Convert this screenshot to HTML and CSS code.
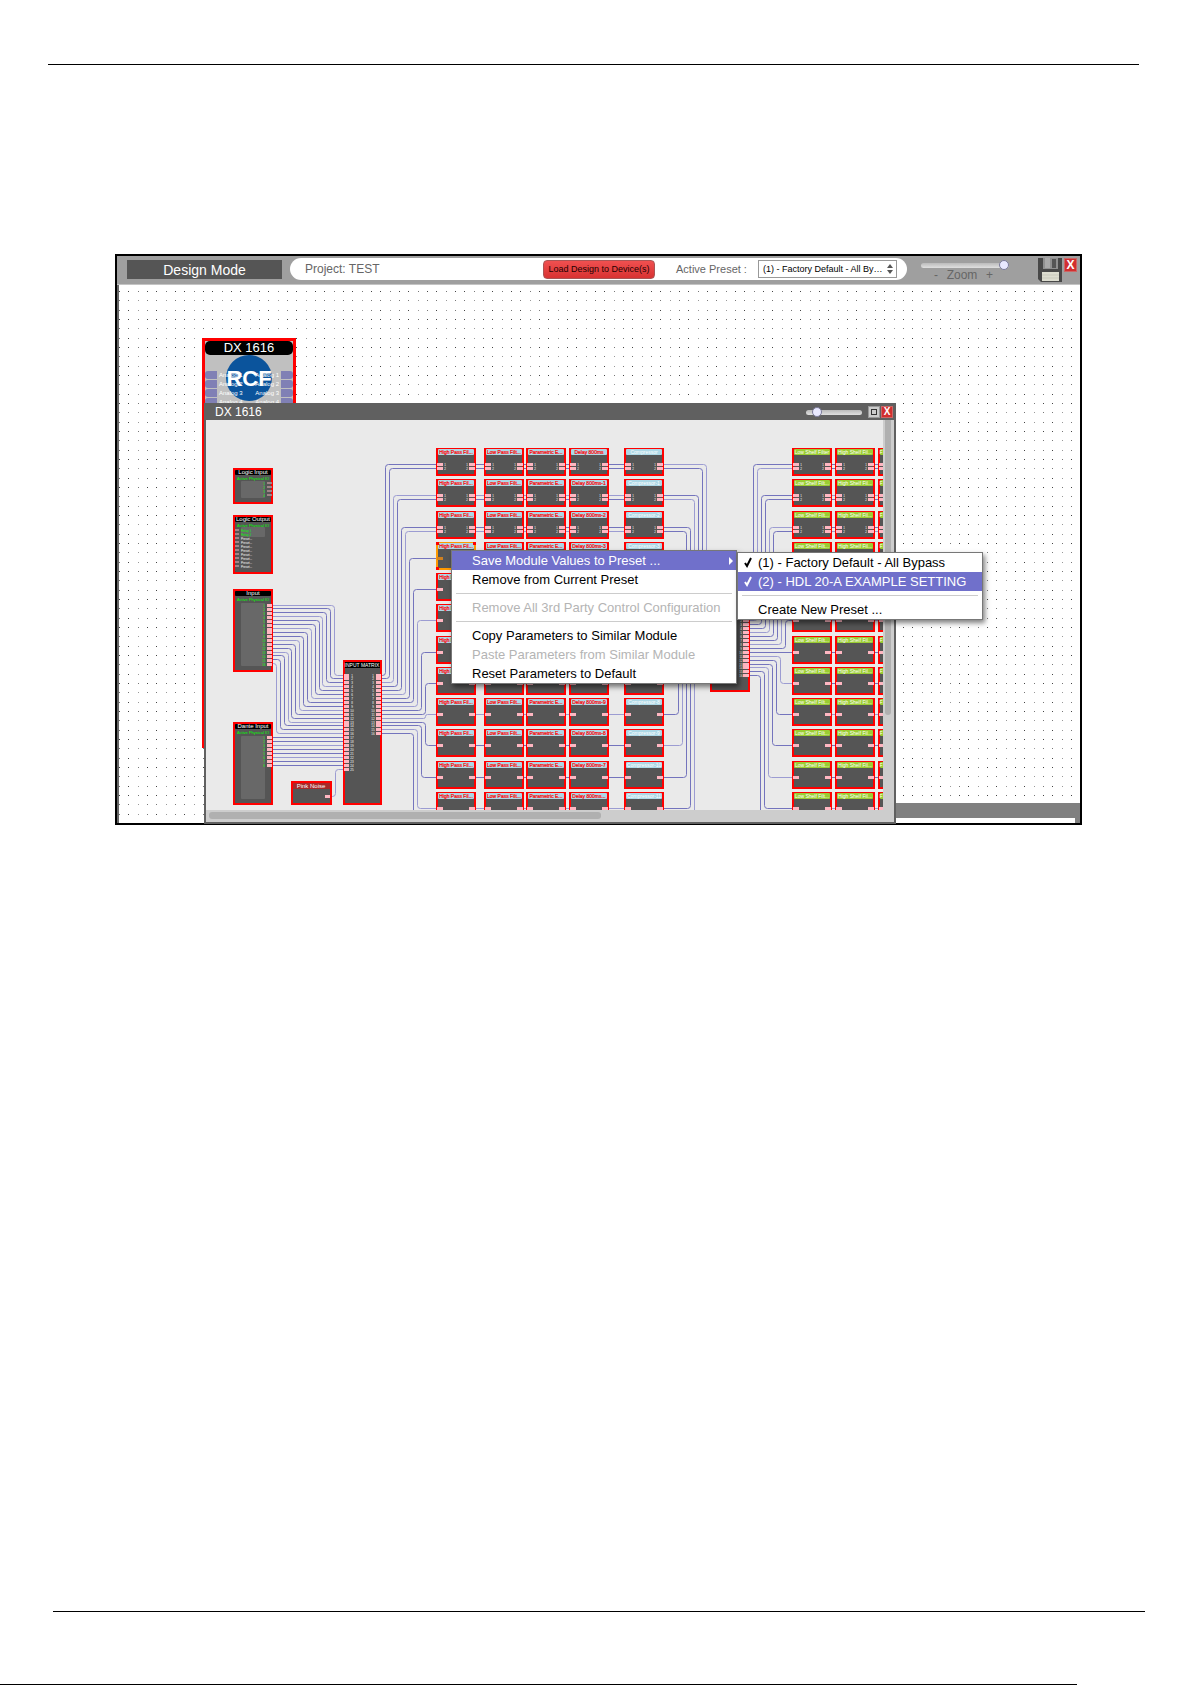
FILE: index.html
```html
<!DOCTYPE html>
<html lang="en">
<head>
<meta charset="utf-8">
<meta name="viewport" content="width=device-width, initial-scale=1">
<title>Design Mode - DX 1616</title>
<link rel="stylesheet" href="styles.css">
</head>
<body>
<hr class="rule rule-top">
<main class="app">
  <header class="toolbar">
    <h1 class="mode">Design Mode</h1>
    <div class="project-bar">
      <span class="project">Project: TEST</span>
      <button class="load" type="button">Load Design to Device(s)</button>
      <label class="preset-label" for="preset">Active Preset :</label>
      <span class="select-wrap">
        <select class="preset" id="preset"><option>(1) - Factory Default - All By…</option></select>
        <svg class="arrows" viewBox="0 0 6 10" aria-hidden="true"><path d="M3 0L6 4H0zM0 6H6L3 10z"/></svg>
      </span>
    </div>
    <div class="zoom">
      <input class="slider" id="zoom" type="range" min="0" max="100" value="100">
      <label class="zoom-label" for="zoom"><span>-</span><span>Zoom</span><span>+</span></label>
    </div>
    <button class="save" type="button" aria-label="Save">
      <svg viewBox="0 0 24 24" aria-hidden="true"><path d="M0 0H24V24H3L0 21z" fill="#484848"/><path d="M5 0H20V11H5z" fill="#909090"/><path d="M7 0H12V10H7z" fill="#a9a9a9"/><path d="M14 1H18V10H14z" fill="#555"/><path d="M4 14H21V23H4z" fill="#dcdccf"/><path d="M4 17H21M4 20H21" stroke="#c9c9bc"/></svg>
    </button>
    <button class="close" type="button" aria-label="Close">X</button>
  </header>

  <section class="canvas">
    <svg class="dots" aria-hidden="true">
      <defs><pattern id="grid" width="28" height="28" patternUnits="userSpaceOnUse">
        <path fill="#444" d="M0 6h1v1h-1zM9 6h1v1h-1zM9 25h1v1h-1z"/>
        <path fill="#777" d="M19 6h1v1h-1zM0 15h1v1h-1zM9 15h1v1h-1zM0 25h1v1h-1z"/>
        <path fill="#999" d="M19 15h1v1h-1zM19 25h1v1h-1z"/>
      </pattern></defs>
      <rect width="100%" height="100%" fill="url(#grid)"/>
    </svg>

    <article class="device">
      <h2 class="device-title">DX 1616</h2>
      <svg class="logo" viewBox="0 0 46 46" role="img" aria-label="RCF"><circle cx="23" cy="23" r="23" fill="#0b549c"/><text class="logo-text" x="23" y="31">RCF</text></svg>
      <ul class="channels">
        <li><span>Analog 1</span><span>Analog 1</span></li>
        <li><span>Analog 2</span><span>Analog 2</span></li>
        <li><span>Analog 3</span><span>Analog 3</span></li>
        <li><span>Analog 4</span><span>Analog 4</span></li>
      </ul>
    </article>

    <section class="window">
      <header class="titlebar">
        <h2 class="window-title">DX 1616</h2>
        <input class="slider slider-small" type="range" min="0" max="100" value="14" aria-label="Window zoom">
        <button class="maximize" type="button" aria-label="Maximize"></button>
        <button class="close close-small" type="button" aria-label="Close window">X</button>
      </header>
      <div class="view">
        <svg class="diagram" id="diagram" viewBox="0 0 677 390" role="img" aria-label="Signal flow"></svg>
        <div class="vbar"><div class="vthumb"></div></div>
        <div class="hbar"><div class="hthumb"></div></div>
      </div>
    </section>

    <menu class="menu menu-main">
      <li><button class="item active" type="button">Save Module Values to Preset ...<svg class="more" viewBox="0 0 4 8" aria-hidden="true"><path d="M0 0L4 4L0 8z"/></svg></button></li>
      <li><button class="item" type="button">Remove from Current Preset</button></li>
      <li class="sep"></li>
      <li><button class="item" type="button" disabled>Remove All 3rd Party Control Configuration</button></li>
      <li class="sep"></li>
      <li><button class="item" type="button">Copy Parameters to Similar Module</button></li>
      <li><button class="item" type="button" disabled>Paste Parameters from Similar Module</button></li>
      <li><button class="item" type="button">Reset Parameters to Default</button></li>
    </menu>

    <menu class="menu menu-sub">
      <li><button class="item" type="button"><svg class="check" viewBox="0 0 8 11" aria-hidden="true"><path d="M1 6L3 9L7 1"/></svg>(1) - Factory Default - All Bypass</button></li>
      <li><button class="item active" type="button"><svg class="check" viewBox="0 0 8 11" aria-hidden="true"><path d="M1 6L3 9L7 1"/></svg>(2) - HDL 20-A EXAMPLE SETTING</button></li>
      <li class="sep"></li>
      <li><button class="item" type="button">Create New Preset ...</button></li>
    </menu>
  </section>
  <footer class="dock"><div class="dock-field"></div></footer>
</main>
<div class="page-foot">
  <hr class="rule rule-bottom">
  <hr class="edge">
</div>
<script src="diagram.js"></script>
</body>
</html>
```
FILE: styles.css
```css
* { box-sizing: border-box; }
body {
  margin: 0;
  min-height: 100vh;
  display: flex;
  flex-direction: column;
  background: #fff;
  color: #000;
  font-family: "Liberation Sans", Arial, sans-serif;
  font-size: 12px;
}
h1, h2, menu, ul { margin: 0; padding: 0; font-weight: 400; list-style: none; }
button, select, input { margin: 0; padding: 0; border: 0; font: inherit; }
.rule, .edge { width: auto; height: 1px; margin: 0; border: 0; background: #000; }
.rule-top { margin: 64px 53px 189px 48px; }
.page-foot { margin-top: auto; }
.rule-bottom { margin: 0 47px 72px 53px; }
.edge { margin-right: 115px; }

.app { margin: 0 110px 0 115px; border: 2px solid #000; background: #fff; }

/* toolbar */
.toolbar {
  display: flex;
  align-items: flex-start;
  height: 29px;
  padding: 2px 3px 0 10px;
  background: #9f9f9f;
  border-bottom: 1px solid #c4c4c4;
}
.mode {
  width: 155px;
  margin-top: 2px;
  padding-top: 1px;
  background: #555;
  color: #fff;
  font-size: 14px;
  line-height: 18px;
  text-align: center;
}
.project-bar {
  flex: 1;
  display: flex;
  align-items: center;
  height: 22px;
  margin-left: 8px;
  padding: 0 10px 0 15px;
  border-radius: 11px;
  background: #fff;
  color: #666;
}
.project { flex: 1; }
.load {
  width: 112px;
  height: 19px;
  border: 1px solid #a55;
  border-radius: 4px;
  background: linear-gradient(#f05050, #d83232);
  color: #200;
  font-size: 9px;
  white-space: nowrap;
}
.preset-label { width: 82px; margin-left: 21px; font-size: 11px; }
.select-wrap { position: relative; display: flex; width: 139px; height: 18px; }
.preset {
  appearance: none;
  width: 100%;
  padding: 0 12px 0 4px;
  border: 1px solid #999;
  border-radius: 0;
  background: #fff;
  color: #000;
  font-size: 9px;
}
.arrows { position: absolute; right: 4px; top: 4px; width: 6px; height: 10px; fill: #555; }
.zoom { width: 88px; margin: 2px 29px 0 14px; }
.slider { appearance: none; display: block; width: 88px; height: 10px; background: transparent; }
.slider::-webkit-slider-runnable-track { height: 5px; border-radius: 3px; background: linear-gradient(#bbb, #e0e0e0); }
.slider::-webkit-slider-thumb { appearance: none; width: 10px; height: 10px; margin-top: -3px; border: 1px solid #7a7a99; border-radius: 50%; background: #e8e8ff; }
.zoom-label { display: flex; justify-content: space-between; padding: 0 16px 0 13px; color: #666; font-size: 12px; line-height: 10px; }
.save { width: 24px; height: 24px; background: none; }
.save svg { display: block; width: 24px; height: 24px; }
.close {
  width: 13px;
  height: 14px;
  margin-left: 2px;
  border: 1px solid #c66;
  background: #d22f2f;
  color: #fff;
  font-size: 12px;
  font-weight: 700;
  line-height: 12px;
}

/* design canvas */
.canvas { position: relative; min-height: 538px; border-left: 2px solid #666; }
.dots { position: absolute; inset: 0; width: 100%; height: 100%; }
.dock { position: relative; height: 20px; margin: -20px 0 0 700px; padding: 15px 5px 0 0; background: #808080; }
.dock-field { height: 5px; background: #fff; }

.device {
  position: absolute;
  left: 83px;
  top: 53px;
  width: 94px;
  height: 410px;
  border: 3px solid #f00;
  background: #c0c0c0;
}
.device-title { height: 14px; border-radius: 5px; background: #000; color: #fff; font-size: 13px; line-height: 14px; text-align: center; }
.logo { position: absolute; left: 21px; top: 14px; width: 46px; height: 46px; overflow: visible; }
.logo-text { fill: #fff; font: 700 22px "Liberation Sans", Arial, sans-serif; text-anchor: middle; }
.channels { position: relative; margin-top: 16px; color: #fff; font-size: 6px; line-height: 8px; }
.channels li { display: flex; justify-content: space-between; margin-bottom: 1px; padding: 0 2px; border: solid #8080b5; border-width: 0 12px; border-radius: 3px; }

.window {
  position: absolute;
  left: 85px;
  top: 118px;
  width: 692px;
  border: 2px solid #606060;
  border-width: 1px 2px 2px;
  background: #cdcdcd;
  z-index: 1;
}
.titlebar { display: flex; align-items: center; height: 16px; padding: 0 1px 0 9px; background: #606060; }
.window-title { flex: 1; color: #fff; font-size: 12px; line-height: 16px; }
.slider-small { width: 56px; margin-right: 6px; }
.maximize { width: 12px; height: 12px; border: 1px solid #999; background: #444; box-shadow: inset 0 0 0 2px #ccc, inset 0 0 0 3px #333; background: #ccc; }
.close-small { width: 12px; height: 12px; margin-left: 1px; font-size: 10px; line-height: 10px; }
.view { display: grid; grid-template: 390px 12px / 1fr 11px; }
.diagram { display: block; width: 677px; height: 390px; background: #eaeaea; }
.vbar { padding: 0 3px 0 2px; }
.vthumb { height: 295px; border-radius: 0 0 3px 3px; background: #b0b0b0; }
.hbar { padding: 2px 0 0 3px; }
.hthumb { width: 392px; height: 7px; border-radius: 3px; background: #b0b0b0; }

/* context menus */
.menu { position: absolute; z-index: 2; border: 1px solid #777; background: #fff; box-shadow: 2px 3px 5px rgba(0, 0, 0, .5); }
.menu-main { left: 332px; top: 265px; width: 286px; }
.menu-sub { left: 618px; top: 267px; width: 246px; }
.item {
  position: relative;
  display: block;
  width: 100%;
  height: 19px;
  padding-left: 20px;
  background: none;
  color: #000;
  font-size: 13px;
  line-height: 19px;
  text-align: left;
  white-space: nowrap;
}
.item:disabled { color: #b4b4b4; }
.active { background: #7070cb; color: #fff; }
.sep { height: 9px; padding: 4px 4px 0; }
.sep::before { content: ""; display: block; height: 1px; background: #ccc; }
.more { position: absolute; right: 3px; top: 6px; width: 4px; height: 8px; fill: #fff; }
.check { position: absolute; left: 6px; top: 4px; width: 8px; height: 11px; fill: none; stroke: currentColor; stroke-width: 2; }

/* signal flow diagram */
.wire { fill: none; stroke: #7474bd; stroke-width: 1; }
.wire-light { stroke: #9c9cd2; }
.module { fill: #555; stroke: #f00; stroke-width: 2; }
.module-selected { stroke: #f90; }
.handle { fill: #f00; }
.port { fill: #ffb6c1; }
.port-dim { fill: #a08488; }
.port-selected { fill: #d08020; }
.panel { fill: #686868; }
.cap { fill: #000; }
.cap-blue { fill: #add8e6; }
.cap-green { fill: #9acd32; }
.cap-brown { fill: #a52a2a; }
.diagram text { font-family: "Liberation Sans", Arial, sans-serif; font-size: 6px; text-anchor: middle; fill: #fff; }
.diagram .title-small { font-size: 5px; }
.diagram .title-red { font-size: 5px; fill: #f00; stroke: #f00; stroke-width: .2px; }
.diagram .note { font-size: 4px; fill: #0f0; }
.diagram .num { font-size: 3px; }
.diagram .num-green { font-size: 3px; fill: #0f0; }
.diagram .relay { font-size: 3px; text-anchor: start; }
.diagram .relay-on { fill: #0f0; }
```
FILE: diagram.js
```js
const svg = document.getElementById("diagram");

function add(name, cls, attrs, text) {
  const el = document.createElementNS("http://www.w3.org/2000/svg", name);
  el.setAttribute("class", cls);
  for (const key in attrs) el.setAttribute(key, attrs[key]);
  if (text) el.textContent = text;
  svg.appendChild(el);
}
const box = (cls, x, y, width, height, rx = 0) => add("rect", cls, { x, y, width, height, rx });
const label = (cls, x, y, text) => add("text", cls, { x, y }, text);

// Wire with rounded corners: horizontal, vertical at xm, horizontal.
let count = 0;
function wire(x1, y1, xm, y2, x2) {
  const s = Math.sign(y2 - y1);
  const r = Math.min(3, Math.abs(y2 - y1) / 2);
  const h = Math.sign(x2 - xm) || 1;
  const a = Math.sign(xm - x1) || 1;
  const d = s === 0
    ? `M${x1} ${y1}H${x2}`
    : `M${x1} ${y1}H${xm - a * r}Q${xm} ${y1} ${xm} ${y1 + s * r}V${y2 - s * r}Q${xm} ${y2} ${xm + h * r} ${y2}H${x2}`;
  add("path", count++ % 3 ? "wire" : "wire wire-light", { d });
}

const half = v => Math.floor(v) + 0.5;
const rowY = r => Math.round(28 + 31.25 * r);
// One target per channel: three stereo rows, then mono rows.
const targets = [];
for (let r = 0; r < 13; r++) {
  targets.push(rowY(r) + 16.5);
  if (r < 3) targets.push(rowY(r) + 20.5);
}
const targetRow = i => (i < 6 ? Math.floor(i / 2) : i - 3);

// Input -> matrix, Dante -> matrix, pink noise -> matrix
const matIn = i => half(255 + 3.92 * i);
for (let i = 0; i < 16; i++) wire(67, half(185 + 3.92 * i), half(128.5 - 3.87 * i), matIn(i), 138);
for (let i = 16; i < 24; i++) wire(67, matIn(i), 100, matIn(i), 138);
wire(126, 376.5, 129.5, matIn(24), 138);

// Matrix -> processing rows
for (let i = 0; i < 16; i++) {
  const x = i <= 10 ? 179.5 + 4 * i : 219.5 - 4 * Math.max(0, i - 12);
  wire(176, matIn(i), x, targets[i], 230);
}
// Rows across, and on to the output matrix
targets.forEach((y, i) => {
  wire(230, y, 300, y, 458);
  const r = targetRow(i);
  const x = i < 6 ? 500.5 - 4 * i : r < 8 ? 476.5 - 4 * (r - 3) : 472.5 + 4 * (r - 8);
  wire(458, y, x, half(197 + 3.92 * i), 504);
});
// Output matrix -> output rows
for (let i = 0; i < 16; i++) {
  const x = i <= 8 ? 547.5 + 4 * i : 574.5 - 4 * (i - 10);
  const y1 = half(197 + 3.92 * i);
  wire(544, i === 9 ? targets[9] : y1, x, targets[i], 586);
  wire(586, targets[i], 600, targets[i], 677);
}

// Source modules
function source(y, h, title) {
  box("module", 28, y + 1, 38, h - 2);
  box("cap", 29, y + 2, 36, 5, 1);
  label("title", 47, y + 6, title);
  label("note", 47, y + 12, "Active Physical IO");
}
source(48, 36, "Logic Input");
box("panel", 35, 61, 24, 17, 1);
for (let i = 0; i < 4; i++) {
  box("port-dim", 61, 62 + 4 * i, 5, 2);
  label("num-green", 58, 65 + 4 * i, String(i + 1));
}
source(95, 59, "Logic Output");
box("panel", 35, 107, 24, 10, 1);
for (let i = 0; i < 10; i++) {
  box("port-dim", 29, 109 + 4 * i, 4, 2);
  label(i < 2 ? "relay relay-on" : "relay", 35, 112 + 4 * i, i < 2 ? `Relay ${i + 1}` : "Preset...");
}
source(169, 83, "Input");
box("panel", 35, 183, 24, 63, 1);
for (let i = 0; i < 16; i++) {
  box("port", 61, half(183.5 + 3.92 * i) + 0.5, 5, 3);
  label("num-green", 58, Math.round(187 + 3.92 * i), String(i + 1));
}
source(302, 83, "Dante Input");
box("panel", 35, 316, 24, 63, 1);
for (let i = 0; i < 8; i++) {
  box("port", 61, matIn(16 + i) - 1.5, 5, 3);
  label("num-green", 58, matIn(16 + i) + 1.5, String(i + 1));
}
box("module", 86, 362, 39, 22);
box("cap-brown", 87, 363, 37, 6);
label("title", 105, 368, "Pink Noise");
box("port", 119, 375, 5, 3);

// Input matrix
box("module", 138, 241, 37, 143);
box("cap", 139, 242, 35, 6);
label("title-small", 156, 247, "INPUT MATRIX");
for (let i = 0; i < 25; i++) {
  box("port", 138, matIn(i) - 1.5, 5, 3);
  label("num", 146, matIn(i) + 1.5, String(i + 1));
}
for (let i = 0; i < 16; i++) {
  box("port", 170, matIn(i) - 1.5, 5, 3);
  label("num", 167, matIn(i) + 1.5, String(i + 1));
}
// Output matrix
box("module", 505, 182, 38, 89);
for (let i = 0; i < 16; i++) {
  box("port", 537, half(197 + 3.92 * i) - 1.5, 6, 3);
  label("num", 535, half(197 + 3.92 * i) + 1.5, String(i + 1));
}

// Processing modules
const delays = ["", "-1", "-2", "-3", "-4", "-5", "-6", "-7", "-9", "-8", "-7", "..."];
const columns = [
  [230, "cap-blue", "title-red", () => "High Pass Fil..."],
  [278, "cap-blue", "title-red", () => "Low Pass Filt..."],
  [320, "cap-blue", "title-red", () => "Parametric E..."],
  [363, "cap-blue", "title-red", r => "Delay 800ms" + delays[r]],
  [418, "cap-blue", "title-small", r => "Compressor" + (r ? "-" + r : "")],
  [586, "cap-green", "title-small", r => (r ? "Low Shelf Filt..." : "Low Shelf Filter")],
  [629, "cap-green", "title-small", () => "High Shelf Fil..."],
  [672, "cap-green", "title-small", () => "F"]
];
columns.forEach(([x, cap, title, text], c) => {
  for (let r = 0; r < 12; r++) {
    const y = rowY(r);
    const selected = c === 0 && r === 3;
    const clipped = c === 7;
    box(selected ? "module module-selected" : "module", x + 1, y + 1, 38, 26);
    box(cap, x + 2, y + 1, 36, 6, 1);
    label(title, clipped ? x + 3 : x + 20, y + 6, text(r));
    for (let k = 0; k < (r < 3 ? 2 : 1); k++) {
      box(selected ? "port-selected" : "port", x + 1, y + 15 + 4 * k, 6, 3);
      box("port", x + 33, y + 15 + 4 * k, 6, 3);
      if (r < 3 && !clipped) {
        label("num", x + 9, y + 18 + 4 * k, String(k + 1));
        label("num", x + 31, y + 18 + 4 * k, String(k + 1));
      }
    }
    if (selected) [[x, y], [x + 37, y], [x, y + 25]].forEach(([hx, hy]) => box("handle", hx, hy, 3, 3));
  }
});
```
